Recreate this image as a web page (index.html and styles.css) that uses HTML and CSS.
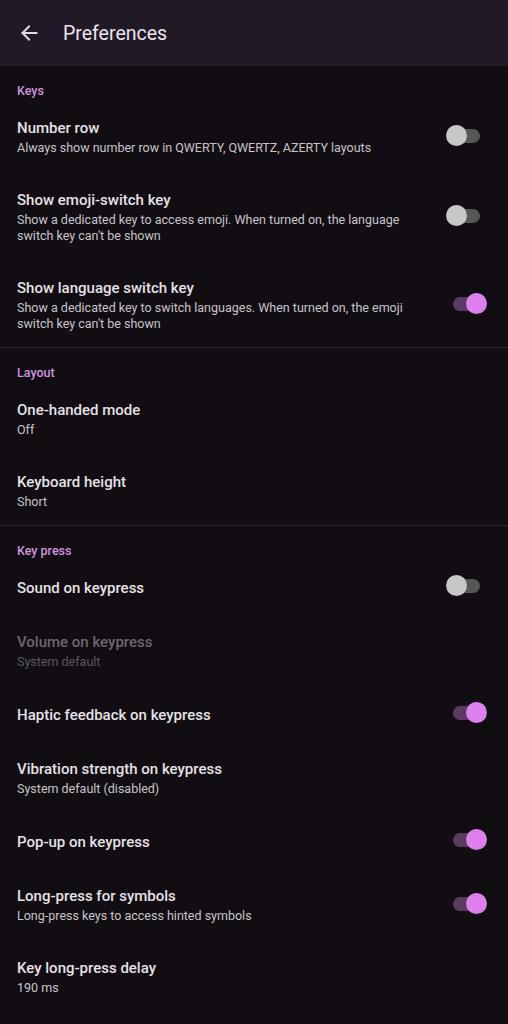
FILE: index.html
```html
<!DOCTYPE html>
<html lang="en">

<head>
    <meta charset="UTF-8">
    <meta name="viewport" content="width=device-width, initial-scale=1.0">
    <title>Preferences</title>
    <link rel="stylesheet" href="styles.css">
</head>

<body>
    <div class="topbar">
        <div class="back">
            <svg width="18" height="18" viewBox="0 0 18 18">
                <path d="M16.5 9H2.5M9 2.5L2.5 9L9 15.5" fill="none" stroke="#e2dae6" stroke-width="2" stroke-linecap="square" />
            </svg>
        </div>
        <h1 class="title">Preferences</h1>
    </div>

    <div class="section">
        <p class="section-head">Keys</p>
        <div class="row">
            <div class="text">
                <p class="row-title">Number row</p>
                <p class="row-sub">Always show number row in QWERTY, QWERTZ, AZERTY layouts</p>
            </div>
            <div class="switch"><span class="track"></span><span class="thumb"></span></div>
        </div>
        <div class="row">
            <div class="text">
                <p class="row-title">Show emoji-switch key</p>
                <p class="row-sub">Show a dedicated key to access emoji. When turned on, the language switch key can't be shown</p>
            </div>
            <div class="switch"><span class="track"></span><span class="thumb"></span></div>
        </div>
        <div class="row">
            <div class="text">
                <p class="row-title">Show language switch key</p>
                <p class="row-sub">Show a dedicated key to switch languages. When turned on, the emoji switch key can't be shown</p>
            </div>
            <div class="switch on"><span class="track"></span><span class="thumb"></span></div>
        </div>
    </div>

    <div class="section">
        <p class="section-head">Layout</p>
        <div class="row">
            <div class="text">
                <p class="row-title">One-handed mode</p>
                <p class="row-sub">Off</p>
            </div>
        </div>
        <div class="row">
            <div class="text">
                <p class="row-title">Keyboard height</p>
                <p class="row-sub">Short</p>
            </div>
        </div>
    </div>

    <div class="section last">
        <p class="section-head">Key press</p>
        <div class="row">
            <div class="text">
                <p class="row-title">Sound on keypress</p>
            </div>
            <div class="switch"><span class="track"></span><span class="thumb"></span></div>
        </div>
        <div class="row disabled">
            <div class="text">
                <p class="row-title">Volume on keypress</p>
                <p class="row-sub">System default</p>
            </div>
        </div>
        <div class="row">
            <div class="text">
                <p class="row-title">Haptic feedback on keypress</p>
            </div>
            <div class="switch on"><span class="track"></span><span class="thumb"></span></div>
        </div>
        <div class="row">
            <div class="text">
                <p class="row-title">Vibration strength on keypress</p>
                <p class="row-sub">System default (disabled)</p>
            </div>
        </div>
        <div class="row">
            <div class="text">
                <p class="row-title">Pop-up on keypress</p>
            </div>
            <div class="switch on"><span class="track"></span><span class="thumb"></span></div>
        </div>
        <div class="row">
            <div class="text">
                <p class="row-title">Long-press for symbols</p>
                <p class="row-sub">Long-press keys to access hinted symbols</p>
            </div>
            <div class="switch on"><span class="track"></span><span class="thumb"></span></div>
        </div>
        <div class="row">
            <div class="text">
                <p class="row-title">Key long-press delay</p>
                <p class="row-sub">190 ms</p>
            </div>
        </div>
    </div>
</body>

</html>
```

FILE: styles.css
```css
body {
    margin: 0px;
    padding: 0px;
    background-color: #110d12;
    font-family: Roboto, "Noto Sans", sans-serif;
    color: #e6e1e6;
}

p {
    margin: 0px;
}

.topbar {
    display: flex;
    align-items: center;
    height: 66px;
    background-color: #211a26;
}

.back {
    display: flex;
    width: 18px;
    height: 18px;
    margin-left: 20px;
}

.title {
    margin: 0px 0px 0px 25px;
    font-size: 19.5px;
    font-weight: 400;
    color: #ebe3ef;
}

.section {
    border-bottom: 1px solid #2b272d;
}

.section.last {
    border-bottom: none;
}

.section-head {
    padding: 17px 17px 0px;
    font-size: 12.5px;
    line-height: 16px;
    font-weight: 500;
    color: #cf93df;
}

.section:first-of-type .section-head {
    padding-top: 18px;
}

.row {
    display: flex;
    align-items: center;
    padding: 19px 21px 15px 17px;
}

.section.last .row {
    padding-top: 18px;
    padding-bottom: 16px;
}

.text {
    flex: 1;
}

.row-title {
    font-size: 15px;
    line-height: 20px;
    font-weight: 500;
    color: #e6e1e6;
}

.row-sub {
    margin-top: 2px;
    font-size: 12.5px;
    line-height: 16px;
    color: #c9c4ca;
}

.disabled .row-title {
    color: #6c676e;
}

.disabled .row-sub {
    color: #5c585e;
}

.switch {
    position: relative;
    width: 41px;
    height: 21px;
    margin: -2px 0px 2px 28px;
    flex-shrink: 0;
}

.track {
    position: absolute;
    left: 7px;
    top: 4px;
    width: 27px;
    height: 14px;
    border-radius: 7px;
    background-color: #59565a;
}

.thumb {
    position: absolute;
    left: 0px;
    top: 0px;
    width: 21px;
    height: 21px;
    border-radius: 50%;
    background-color: #c9c6ca;
}

.switch.on .track {
    background-color: #5b3a62;
}

.switch.on .thumb {
    left: 20px;
    background-color: #df80f0;
}
```
